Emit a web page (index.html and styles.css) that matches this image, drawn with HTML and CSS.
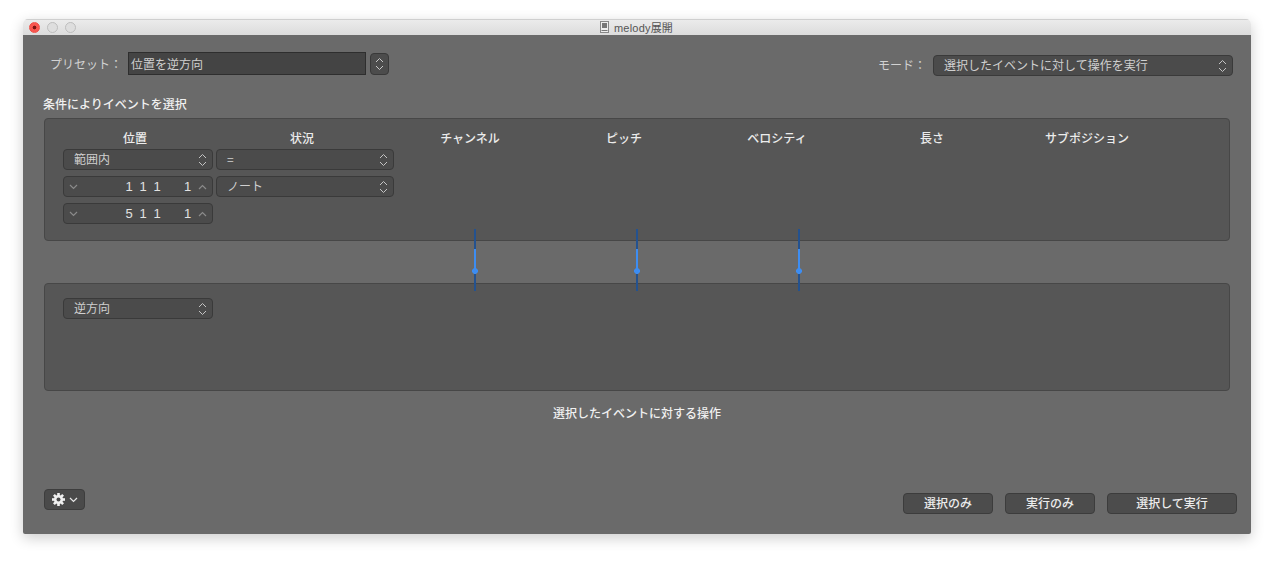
FILE: index.html
```html
<!DOCTYPE html>
<html lang="ja">
<head>
<meta charset="utf-8">
<title>melody展開</title>
<link rel="stylesheet" href="styles.css">
</head>
<body>
<svg class="defs" width="0" height="0" aria-hidden="true">
  <symbol id="updown" viewBox="0 0 9 14"><path d="M1 5 L4.5 1.5 L8 5 M1 9 L4.5 12.5 L8 9" fill="none" stroke="currentColor" stroke-width="1"/></symbol>
  <symbol id="down" viewBox="0 0 9 6"><path d="M1 1 L4.5 4.5 L8 1" fill="none" stroke="currentColor" stroke-width="1.2"/></symbol>
  <symbol id="up" viewBox="0 0 9 6"><path d="M1 5 L4.5 1.5 L8 5" fill="none" stroke="currentColor" stroke-width="1.2"/></symbol>
</svg>
<main class="window">
  <header class="titlebar">
    <div class="lights"><span class="light close"></span><span class="light"></span><span class="light"></span></div>
    <div class="title">
      <svg class="doc" width="9" height="12" viewBox="0 0 9 12"><rect x="0.5" y="0.5" width="8" height="11" fill="#eee" stroke="#888"/><rect x="2" y="2" width="5" height="5" fill="#777"/><rect x="1.5" y="9" width="6" height="1" fill="#777"/></svg>
      <span>melody展開</span>
    </div>
  </header>
  <div class="content">
    <div class="toprow">
      <div class="preset">
        <span class="label preset-label">プリセット：</span>
        <div class="preset-field">位置を逆方向</div>
        <div class="stepper"><svg class="icon-ud"><use href="#updown"/></svg></div>
      </div>
      <div class="mode">
        <span class="label mode-label">モード：</span>
        <div class="select mode-select"><span>選択したイベントに対して操作を実行</span><svg class="icon-ud"><use href="#updown"/></svg></div>
      </div>
    </div>
    <h2 class="section-title">条件によりイベントを選択</h2>
    <section class="panel panel-cond">
      <div class="heads">
        <span>位置</span><span>状況</span><span>チャンネル</span><span>ピッチ</span><span>ベロシティ</span><span>長さ</span><span>サブポジション</span>
      </div>
      <div class="rows">
        <div class="row">
          <div class="select w1"><span>範囲内</span><svg class="icon-ud"><use href="#updown"/></svg></div>
          <div class="select w2"><span>=</span><svg class="icon-ud"><use href="#updown"/></svg></div>
        </div>
        <div class="row">
          <div class="select spin w1"><svg class="icon-c"><use href="#down"/></svg><span class="nums"><i>1</i><i>1</i><i>1</i><i class="last">1</i></span><svg class="icon-c"><use href="#up"/></svg></div>
          <div class="select w2"><span>ノート</span><svg class="icon-ud"><use href="#updown"/></svg></div>
        </div>
        <div class="row">
          <div class="select spin w1"><svg class="icon-c"><use href="#down"/></svg><span class="nums"><i>5</i><i>1</i><i>1</i><i class="last">1</i></span><svg class="icon-c"><use href="#up"/></svg></div>
        </div>
      </div>
    </section>
    <section class="panel panel-op">
      <div class="select w1"><span>逆方向</span><svg class="icon-ud"><use href="#updown"/></svg></div>
    </section>
    <p class="caption">選択したイベントに対する操作</p>
    <footer class="bottom">
      <div class="gear-btn">
        <svg width="13" height="13" viewBox="0 0 13 13"><g fill="#f0f0f0"><circle cx="6.5" cy="6.5" r="4.6"/><rect x="5.2" y="0" width="2.6" height="13"/><rect x="0" y="5.2" width="13" height="2.6"/><rect x="5.2" y="0" width="2.6" height="13" transform="rotate(45 6.5 6.5)"/><rect x="5.2" y="0" width="2.6" height="13" transform="rotate(-45 6.5 6.5)"/></g><circle cx="6.5" cy="6.5" r="2" fill="#4a4a4a"/></svg>
        <svg class="icon-c gear-c"><use href="#down"/></svg>
      </div>
      <div class="actions">
        <button class="btn b1">選択のみ</button>
        <button class="btn b1">実行のみ</button>
        <button class="btn b2">選択して実行</button>
      </div>
    </footer>
    <div class="link l1"><b></b></div>
    <div class="link l2"><b></b></div>
    <div class="link l3"><b></b></div>
  </div>
</main>
</body>
</html>
```
FILE: styles.css
```css
* { box-sizing: border-box; }
html, body { margin: 0; height: 100%; }
body {
  background: #fff;
  padding: 19px 23px 0;
  font-family: "Noto Sans CJK JP", "Liberation Sans", sans-serif;
  font-size: 12px;
  overflow: hidden;
}
.defs { position: absolute; }
.window {
  width: 1228px;
  height: 515px;
  border-radius: 5px 5px 2px 2px;
  box-shadow: 0 4px 14px rgba(0,0,0,.2);
  overflow: hidden;
  display: flex;
  flex-direction: column;
}
.titlebar {
  height: 16px;
  flex: none;
  background: linear-gradient(#ebebeb, #dcdcdc);
  border-top: 1px solid #cfcfcf;
  display: flex;
  align-items: center;
  position: relative;
}
.lights { display: flex; gap: 7px; padding-left: 6px; }
.light { width: 11px; height: 11px; border-radius: 50%; border: 1px solid #bdbdbd; background: #dedede; }
.light.close { background: radial-gradient(circle, #7a1512 0 1.6px, #f9564f 2.2px); border-color: #ee4f47; }
.title {
  position: absolute;
  left: 577px;
  top: -1px;
  height: 15px;
  display: flex;
  align-items: center;
  gap: 5px;
  color: #555;
  font-size: 11px;
  letter-spacing: .2px;
  font-family: "Liberation Sans", "Noto Sans CJK JP", sans-serif;
}
.content {
  flex: 1;
  background: #6a6a6a;
  position: relative;
  padding: 0 21px;
  display: flex;
  flex-direction: column;
}
.toprow { height: 59px; flex: none; display: flex; justify-content: space-between; }
.label { color: #d2d2d2; }
.preset { display: flex; align-items: flex-start; padding: 17px 0 0 6px; }
.preset-label { width: 78px; line-height: 23px; }
.preset-field {
  width: 238px; height: 23px; line-height: 21px;
  background: #444; border: 1px solid #2e2e2e;
  padding-left: 2px; color: #cfcfcf;
}
.stepper {
  width: 19px; height: 22px; margin: 1px 0 0 4px;
  background: #4c4c4c; border: 1px solid #393939; border-radius: 4px;
  display: flex; align-items: center; justify-content: center; color: #c8c8c8;
}
.icon-ud { width: 9px; height: 14px; flex: none; }
.icon-c { width: 9px; height: 6px; flex: none; color: #8a8a8a; }
.mode { display: flex; align-items: flex-start; padding-top: 20px; margin-right: -3px; }
.mode-label { width: 55px; line-height: 20px; }
.select {
  height: 21px;
  background: #4b4b4b;
  border: 1px solid #3a3a3a;
  border-radius: 4px;
  color: #d0d0d0;
  display: flex;
  align-items: center;
  justify-content: space-between;
  padding: 0 5px 0 10px;
  line-height: 18px;
}
.select > span:not(.nums) { margin-top: -1px; }
.select .icon-ud { color: #c4c4c4; }
.mode-select { width: 300px; }
.section-title {
  margin: 0;
  height: 24px;
  flex: none;
  font-size: 12px;
  line-height: 20px;
  font-weight: 500;
  color: #f0f0f0;
  margin-left: -1px;
}
.panel {
  width: 1186px;
  flex: none;
  background: #565656;
  border: 1px solid #474747;
  border-radius: 4px;
}
.panel-cond { height: 123px; padding: 10px 0 0 15px; }
.heads {
  display: grid;
  grid-template-columns: 150px 184px 152px 156px 150px 160px 150px;
  color: #ececec;
  font-weight: 500;
  text-align: center;
  line-height: 18px;
  height: 20px;
}
.rows { display: flex; flex-direction: column; gap: 6px; padding-left: 3px; }
.row { display: flex; gap: 3px; }
.w1 { width: 150px; }
.w2 { width: 178px; }
.spin { padding: 0 5px 0 5px; }
.nums { display: flex; margin-left: auto; margin-right: 7px; color: #e2e2e2; font-family: "Liberation Sans", sans-serif; font-size: 13px; }
.nums i { font-style: normal; width: 14px; text-align: center; }
.nums i.last { margin-left: 20px; width: 7px; }
.panel-op { height: 108px; margin-top: 42px; padding: 14px 0 0 18px; }
.caption {
  margin: 0;
  flex: none;
  height: 48px;
  line-height: 44px;
  width: 1186px;
  text-align: center;
  color: #f0f0f0;
  font-weight: 500;
}
.bottom { flex: 1; position: relative; display: flex; justify-content: space-between; align-items: flex-start; padding-top: 42px; }
.gear-btn {
  width: 41px; height: 21px; margin-top: 8px;
  background: #4a4a4a; border: 1px solid #3d3d3d; border-radius: 4px;
  display: flex; align-items: center; gap: 4px; padding-left: 7px;
}
.gear-c { color: #e6e6e6; }
.actions { display: flex; gap: 12px; margin-top: 12px; margin-right: -7px; }
.btn {
  height: 21px; padding: 0 0 2px;
  background: #4c4c4c; border: 1px solid #3c3c3c; border-radius: 4px;
  color: #ececec; font: 500 12px/17px "Noto Sans CJK JP", sans-serif;
}
.b1 { width: 90px; }
.b2 { width: 130px; }
.link { position: absolute; top: 194px; width: 2px; height: 62px; background: #24528f; }
.link b { position: absolute; left: 0; top: 20px; width: 2px; height: 22px; background: #3d8df2; }
.link b::after { content: ""; position: absolute; left: -2px; top: 19px; width: 6px; height: 6px; background: #3d8df2; clip-path: polygon(33% 0, 67% 0, 100% 33%, 100% 67%, 67% 100%, 33% 100%, 0 67%, 0 33%); }
.l1 { left: 451px; }
.l2 { left: 613px; }
.l3 { left: 775px; }
```
